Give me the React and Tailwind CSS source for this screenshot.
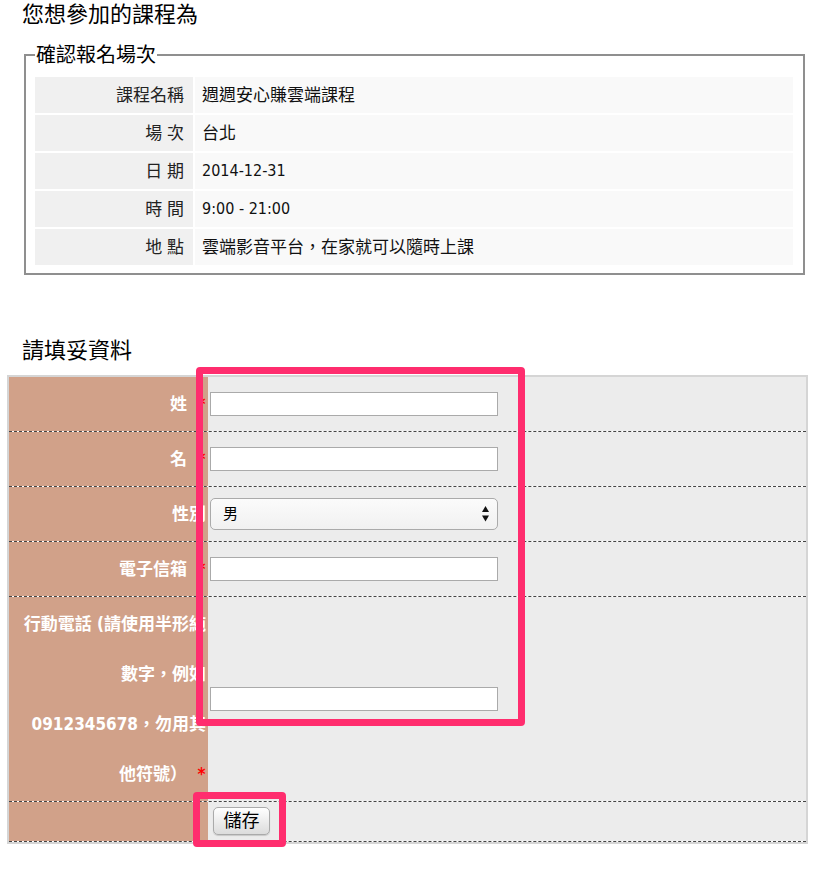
import { useState } from "react"

const font = "font-['DejaVu_Sans_Condensed','Liberation_Sans','Noto_Sans_CJK_TC',sans-serif]"

const courseRows = [
  ["課程名稱", "週週安心賺雲端課程"],
  ["場 次", "台北"],
  ["日 期", "2014-12-31", true],
  ["時 間", "9:00 - 21:00", true],
  ["地 點", "雲端影音平台，在家就可以隨時上課"],
]

function Star() {
  return <span className="inline-block w-[9px] ml-[10px] text-center text-[#ff0000]">*</span>
}

function FormRow({ label, children, tall }) {
  return (
    <div className="flex border-b border-dashed border-[#444]">
      <div className="w-[199px] shrink-0 bg-[#d1a189] text-right pr-[2px] py-[2px] leading-[50px] text-white font-bold text-[17px] whitespace-nowrap">
        {label}
      </div>
      <div className="flex-1 flex items-center bg-[#ececec] pl-[2px]">{children}</div>
    </div>
  )
}

function TextBox() {
  return <input type="text" className="h-[24px] w-[288px] border border-[#aaa] bg-white outline-none" />
}

export default function App() {
  const [gender, setGender] = useState("男")

  return (
    <div className={`relative w-[827px] min-h-[871px] bg-white text-black ${font}`}>
      {/* 課程資訊 */}
      <h2 className="ml-[22px] text-[22px] leading-[30px] font-normal">您想參加的課程為</h2>

      <fieldset className="ml-[24px] mt-[13px] w-[781px] border-2 border-solid border-[#8f8f8f] pl-[9px] pr-[10px] pt-[10px] pb-[8px]">
        <legend className="px-[1px] text-[20px] leading-[24px]">確認報名場次</legend>
        <div className="flex flex-col gap-[2px]">
          {courseRows.map(([k, v, latin]) => (
            <div key={k} className="flex gap-[2px] h-[36px] text-[17px] leading-[36px]">
              <div className="w-[158px] shrink-0 bg-[#f0f0f0] text-right pr-[9px] text-[#222] whitespace-pre">{k}</div>
              <div className={`flex-1 bg-[#f9f9f9] pl-[7px] text-[#111] ${latin ? "text-[16px]" : ""}`}>{v}</div>
            </div>
          ))}
        </div>
      </fieldset>

      {/* 報名表 */}
      <h2 className="ml-[22px] mt-[61px] text-[22px] leading-[30px] font-normal">請填妥資料</h2>

      <div className="ml-[7px] mt-[9px] w-[801px] border-2 border-[#d5d5d5] border-b-[#d5d5d5]">
        <FormRow label={<>姓<Star /></>}>
          <TextBox />
        </FormRow>
        <FormRow label={<>名<Star /></>}>
          <TextBox />
        </FormRow>
        <FormRow label="性別">
          <div className="relative">
            <select
              value={gender}
              onChange={(e) => setGender(e.target.value)}
              className="appearance-none h-[32px] w-[288px] rounded-[5px] border border-[#aaa] bg-gradient-to-b from-[#fbfbfb] to-[#f1f1f1] pl-[12px] text-[15px] outline-none"
            >
              <option>男</option>
              <option>女</option>
            </select>
            <svg className="absolute right-[9px] top-[8px] pointer-events-none" width="7" height="16" viewBox="0 0 7 16">
              <path d="M3.5 0 L7 6 L0 6 Z" fill="#111" />
              <path d="M0 9.5 L7 9.5 L3.5 15.5 Z" fill="#111" />
            </svg>
          </div>
        </FormRow>
        <FormRow label={<>電子信箱<Star /></>}>
          <TextBox />
        </FormRow>
        <FormRow
          label={
            <>
              行動電話 (請使用半形純<br />
              數字，例如<br />
              0912345678，勿用其<br />
              他符號）<Star />
            </>
          }
        >
          <TextBox />
        </FormRow>
        <div className="flex border-b border-dashed border-[#444]">
          <div className="w-[199px] shrink-0 bg-[#d1a189]" />
          <div className="flex-1 bg-[#ececec] pl-[5px] pt-[5px] pb-[6px]">
            <button className="h-[28px] w-[57px] rounded-[5px] border border-[#aaa] bg-gradient-to-b from-white to-[#dcdcdc] text-[18px] leading-none text-black shadow-[0_1px_1px_rgba(0,0,0,0.15)]">
              儲存
            </button>
          </div>
        </div>
      </div>

      {/* 標示框 */}
      <div className="absolute left-[196px] top-[367px] w-[329px] h-[359px] border-[7px] border-[#ff2d6e] rounded-[4px] pointer-events-none" />
      <div className="absolute left-[193px] top-[792px] w-[93px] h-[55px] border-[7px] border-[#ff2d6e] rounded-[4px] pointer-events-none" />
    </div>
  )
}
